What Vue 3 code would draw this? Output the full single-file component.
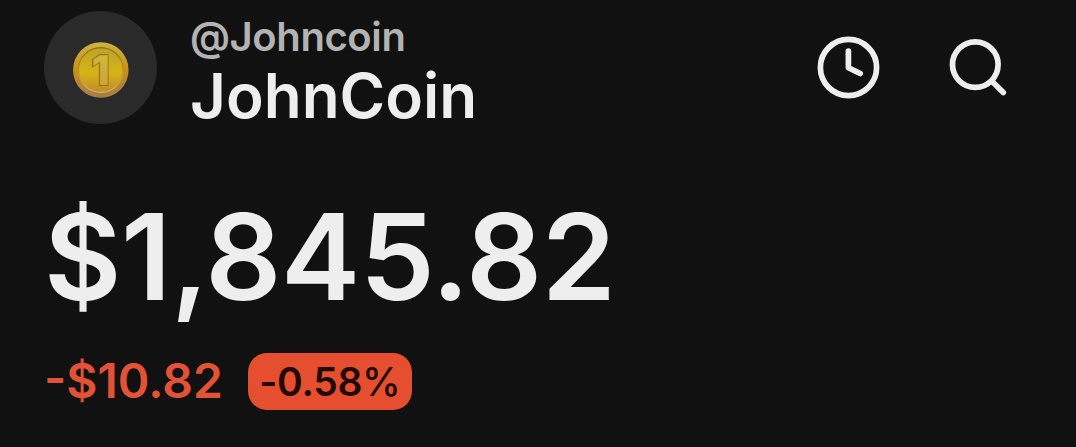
<template>
  <main class="wallet">
    <header class="wallet-header">
      <div class="account">
        <div class="avatar">
          <svg class="coin" viewBox="0 0 56 56" aria-hidden="true">
            <defs>
              <linearGradient id="coin-edge" x1="0" y1="0" x2="0" y2="1">
                <stop offset="0" stop-color="#cdb33e" />
                <stop offset="0.5" stop-color="#c98f1a" />
                <stop offset="1" stop-color="#a57b4c" />
              </linearGradient>
              <linearGradient id="coin-face" x1="0" y1="0" x2="0" y2="1">
                <stop offset="0" stop-color="#bba22a" />
                <stop offset="0.55" stop-color="#d6b416" />
                <stop offset="1" stop-color="#c08c2a" />
              </linearGradient>
              <linearGradient id="coin-ring" x1="0" y1="0" x2="0" y2="1">
                <stop offset="0" stop-color="#8f6c18" />
                <stop offset="0.5" stop-color="#b98f22" />
                <stop offset="1" stop-color="#d9b558" />
              </linearGradient>
              <linearGradient id="coin-digit" x1="0" y1="0" x2="0" y2="1">
                <stop offset="0" stop-color="#d3bc3c" />
                <stop offset="1" stop-color="#cba03c" />
              </linearGradient>
            </defs>
            <circle cx="27.8" cy="28" r="27.8" fill="url(#coin-edge)" />
            <circle cx="27.8" cy="28" r="22.4" fill="url(#coin-face)" stroke="url(#coin-ring)" stroke-width="1.3" />
            <text x="27.3" y="43.4" text-anchor="middle" class="coin-number coin-shadow">1</text>
            <text x="27.6" y="42.6" text-anchor="middle" class="coin-number">1</text>
          </svg>
        </div>
        <div class="identity">
          <span class="handle">@Johncoin</span>
          <span class="name">JohnCoin</span>
        </div>
      </div>
      <nav class="actions">
        <button class="action" aria-label="History">
          <svg width="66" height="66" viewBox="0 0 66 66">
            <circle cx="32.5" cy="33.5" r="28.1" />
            <path d="M32.4 17v16.8l11.8 5.7" />
          </svg>
        </button>
        <button class="action" aria-label="Search">
          <svg width="66" height="66" viewBox="0 0 66 66">
            <circle cx="29.3" cy="30.6" r="22.8" />
            <path d="M46 47.3l11.3 11.2" />
          </svg>
        </button>
      </nav>
    </header>
    <section class="portfolio">
      <div class="balance">$1,845.82</div>
      <div class="change">
        <span class="change-amount">-$10.82</span>
        <span class="change-badge">
          <span class="change-percent">-0.58<span class="unit">%</span></span>
        </span>
      </div>
    </section>
  </main>
</template>

<script setup>
</script>

<style scoped>
.wallet {
  width: 1076px;
  height: 447px;
  box-sizing: border-box;
  padding: 11px 64px 0 44px;
  overflow: hidden;
  background: #111;
  color: #eee;
  font-family: Inter, "Liberation Sans", sans-serif;
  font-weight: 600;
}

.wallet-header,
.account,
.actions,
.change {
  display: flex;
}

.wallet-header {
  height: 114px;
  justify-content: space-between;
}

.avatar {
  display: flex;
  width: 113px;
  height: 113px;
  align-items: center;
  justify-content: center;
  border-radius: 50%;
  background: #2a2a2a;
}

.coin {
  width: 56px;
  height: 56px;
  margin-top: 5px;
}

.coin-number {
  font: 900 41px Inter, sans-serif;
  fill: url(#coin-digit);
  stroke: #b08420;
  stroke-width: 0.6;
}

.coin-shadow {
  fill: #8a5f16;
  stroke: #8a5f16;
  stroke-width: 1.4;
}

.identity {
  display: flex;
  flex-direction: column;
  margin-left: 33px;
  padding-top: 2px;
}

.handle {
  color: #b3b3b3;
  font-size: 40px;
  line-height: 48px;
  letter-spacing: -0.4px;
}

.name {
  font-size: 62px;
  line-height: 70px;
}

.actions {
  gap: 64px;
  padding-top: 23px;
}

.action {
  width: 66px;
  height: 66px;
  padding: 0;
  border: 0;
  background: none;
  color: inherit;
}

.action svg {
  display: block;
  fill: none;
  stroke: currentColor;
  stroke-width: 5.7;
  stroke-linecap: round;
  stroke-linejoin: round;
}

.balance {
  margin-top: 57px;
  height: 150px;
  font-size: 119px;
  line-height: 150px;
  letter-spacing: -0.4px;
  white-space: nowrap;
}

.change {
  height: 57px;
  margin-top: 21px;
  align-items: center;
}

.change-amount {
  color: #e25237;
  font-size: 48px;
  line-height: 55px;
  padding-bottom: 2px;
}

.change-badge {
  display: flex;
  width: 164px;
  height: 57px;
  margin-left: 25px;
  align-items: center;
  justify-content: center;
  border-radius: 19px;
  background: #e54e2f;
  color: #1f0a05;
}

.change-percent {
  font-size: 39px;
  line-height: 57px;
  letter-spacing: -0.3px;
}

.unit {
  font-weight: 500;
}
</style>
